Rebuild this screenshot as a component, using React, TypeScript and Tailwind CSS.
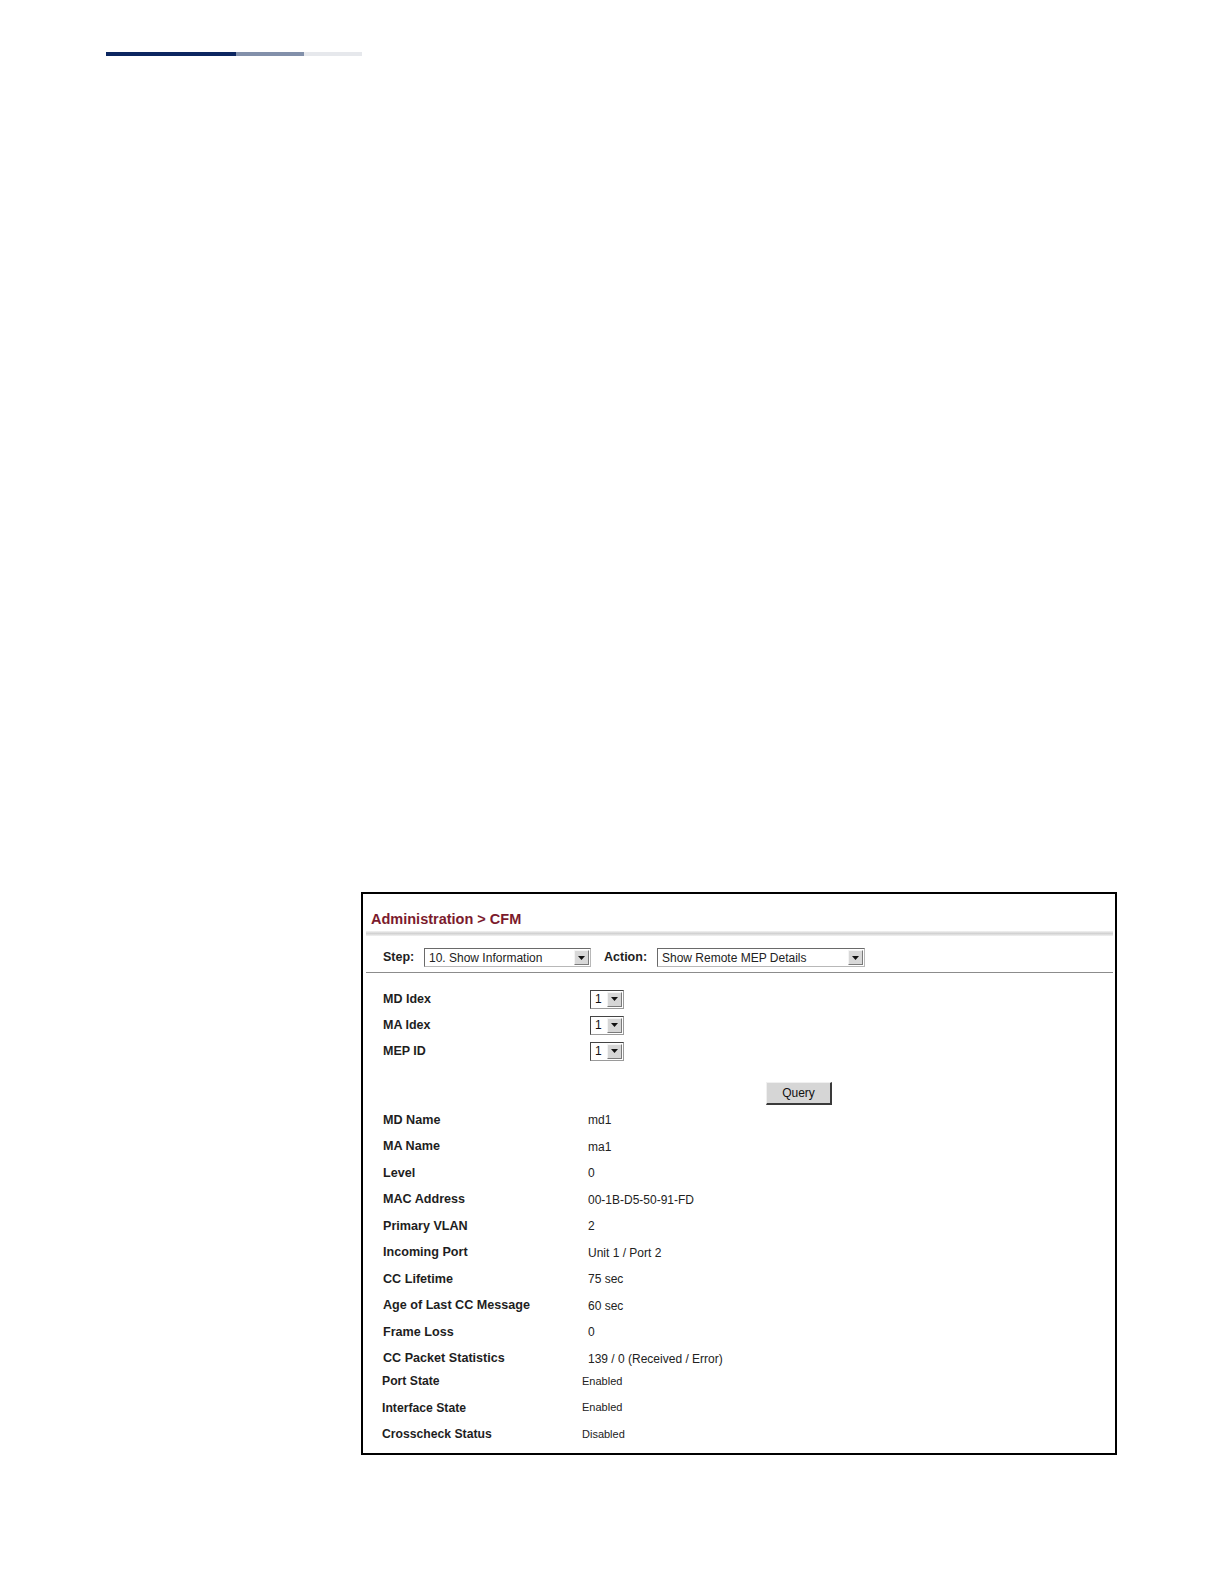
import React from "react";

function Arrow() {
  return (
    <svg width="7" height="4" viewBox="0 0 7 4" className="block">
      <polygon points="0,0 7,0 3.5,4" fill="#111" />
    </svg>
  );
}

function BigSelect({ text, width }: { text: string; width: string }) {
  return (
    <div
      className={`${width} h-[19px] flex items-stretch border border-t-[#6a6a6a] border-l-[#6a6a6a] border-r-[#b8b8b8] border-b-[#b8b8b8] bg-white`}
    >
      <div className="flex-1 flex items-center pl-[4px] text-[12px] text-[#222] leading-none whitespace-nowrap overflow-hidden">
        {text}
      </div>
      <div className="w-[15px] my-[1px] mr-[1px] flex items-center justify-center bg-[#d8d8d8] border border-t-[#f4f4f4] border-l-[#f4f4f4] border-r-[#7a7a7a] border-b-[#7a7a7a]">
        <Arrow />
      </div>
    </div>
  );
}

function SmallSelect() {
  return (
    <div className="w-[34px] h-[19px] flex items-stretch border border-t-[#444] border-l-[#444] border-r-[#9a9a9a] border-b-[#9a9a9a] bg-white">
      <div className="flex-1 flex items-center pl-[4px] text-[12px] text-[#111] leading-none">1</div>
      <div className="w-[15px] my-[1px] mr-[1px] flex items-center justify-center bg-[#d6d6d6] border border-t-[#f4f4f4] border-l-[#f4f4f4] border-r-[#7a7a7a] border-b-[#7a7a7a]">
        <Arrow />
      </div>
    </div>
  );
}

const topRows: [string, string][] = [
  ["MD Name", "md1"],
  ["MA Name", "ma1"],
  ["Level", "0"],
  ["MAC Address", "00-1B-D5-50-91-FD"],
  ["Primary VLAN", "2"],
  ["Incoming Port", "Unit 1 / Port 2"],
  ["CC Lifetime", "75 sec"],
  ["Age of Last CC Message", "60 sec"],
  ["Frame Loss", "0"],
  ["CC Packet Statistics", "139 / 0 (Received / Error)"],
];

const bottomRows: [string, string][] = [
  ["Port State", "Enabled"],
  ["Interface State", "Enabled"],
  ["Crosscheck Status", "Disabled"],
];

export default function App() {
  return (
    <div className="w-[1224px] h-[1584px] bg-white font-['Liberation_Sans',Arial,sans-serif] text-[#1e1e1e]">
      <div className="pt-[52px] pl-[106px] flex">
        <div className="w-[130px] h-[4px] bg-[#0c2660]" />
        <div className="w-[68px] h-[4px] bg-[#8290aa]" />
        <div className="w-[58px] h-[4px] bg-[#e6e8ec]" />
      </div>

      <div className="ml-[361px] mt-[836px] w-[756px] h-[563px] border-2 border-black flex flex-col pt-[16px]">
        <div className="pl-[8px] text-[14.5px] font-bold leading-[18px] text-[#7b1b2d]">
          Administration &gt; CFM
        </div>
        <div className="ml-[3px] mr-[2px] mt-[3px] h-[5px] bg-linear-to-b from-[#f2f2f2] via-[#d2d2d2] to-[#f2f2f2]" />

        <div className="mt-[12px] h-[19px] flex items-center pl-[20px]">
          <div className="w-[41px] text-[12.5px] font-bold leading-none">Step:</div>
          <BigSelect text="10. Show Information" width="w-[167px]" />
          <div className="ml-[13px] w-[53px] text-[12.5px] font-bold leading-none">Action:</div>
          <BigSelect text="Show Remote MEP Details" width="w-[208px]" />
        </div>
        <div className="mt-[5px] ml-[3px] mr-[2px] h-px bg-[#8c8c8c]" />

        <div className="mt-[13px] flex flex-col">
          {["MD Idex", "MA Idex", "MEP ID"].map((l) => (
            <div key={l} className="h-[26px] flex items-center pl-[20px]">
              <div className="w-[207px] text-[12.5px] font-bold leading-none">{l}</div>
              <SmallSelect />
            </div>
          ))}
        </div>

        <div className="mt-[18px] pl-[403px]">
          <button className="w-[66px] h-[23px] flex items-center justify-center bg-[#d6d6d6] border border-t-[#f0f0f0] border-l-[#f0f0f0] border-r-[#3a3a3a] border-b-[#3a3a3a] border-r-2 border-b-2 text-[12px] text-[#111] leading-none font-['Liberation_Sans',Arial,sans-serif]">
            Query
          </button>
        </div>

        <div className="mt-[2px] flex flex-col">
          {topRows.map(([l, v]) => (
            <div key={l} className="h-[26.5px] flex items-center pl-[20px]">
              <div className="w-[205px] text-[12.6px] font-bold leading-none whitespace-nowrap">{l}</div>
              <div className="text-[12px] leading-none whitespace-nowrap text-[#222]">{v}</div>
            </div>
          ))}
        </div>
        <div className="-mt-[4px] flex flex-col">
          {bottomRows.map(([l, v]) => (
            <div key={l} className="h-[26.5px] flex items-center pl-[19px]">
              <div className="w-[200px] text-[12.2px] font-bold leading-none whitespace-nowrap">{l}</div>
              <div className="text-[11px] leading-none whitespace-nowrap text-[#222]">{v}</div>
            </div>
          ))}
        </div>
      </div>
    </div>
  );
}
